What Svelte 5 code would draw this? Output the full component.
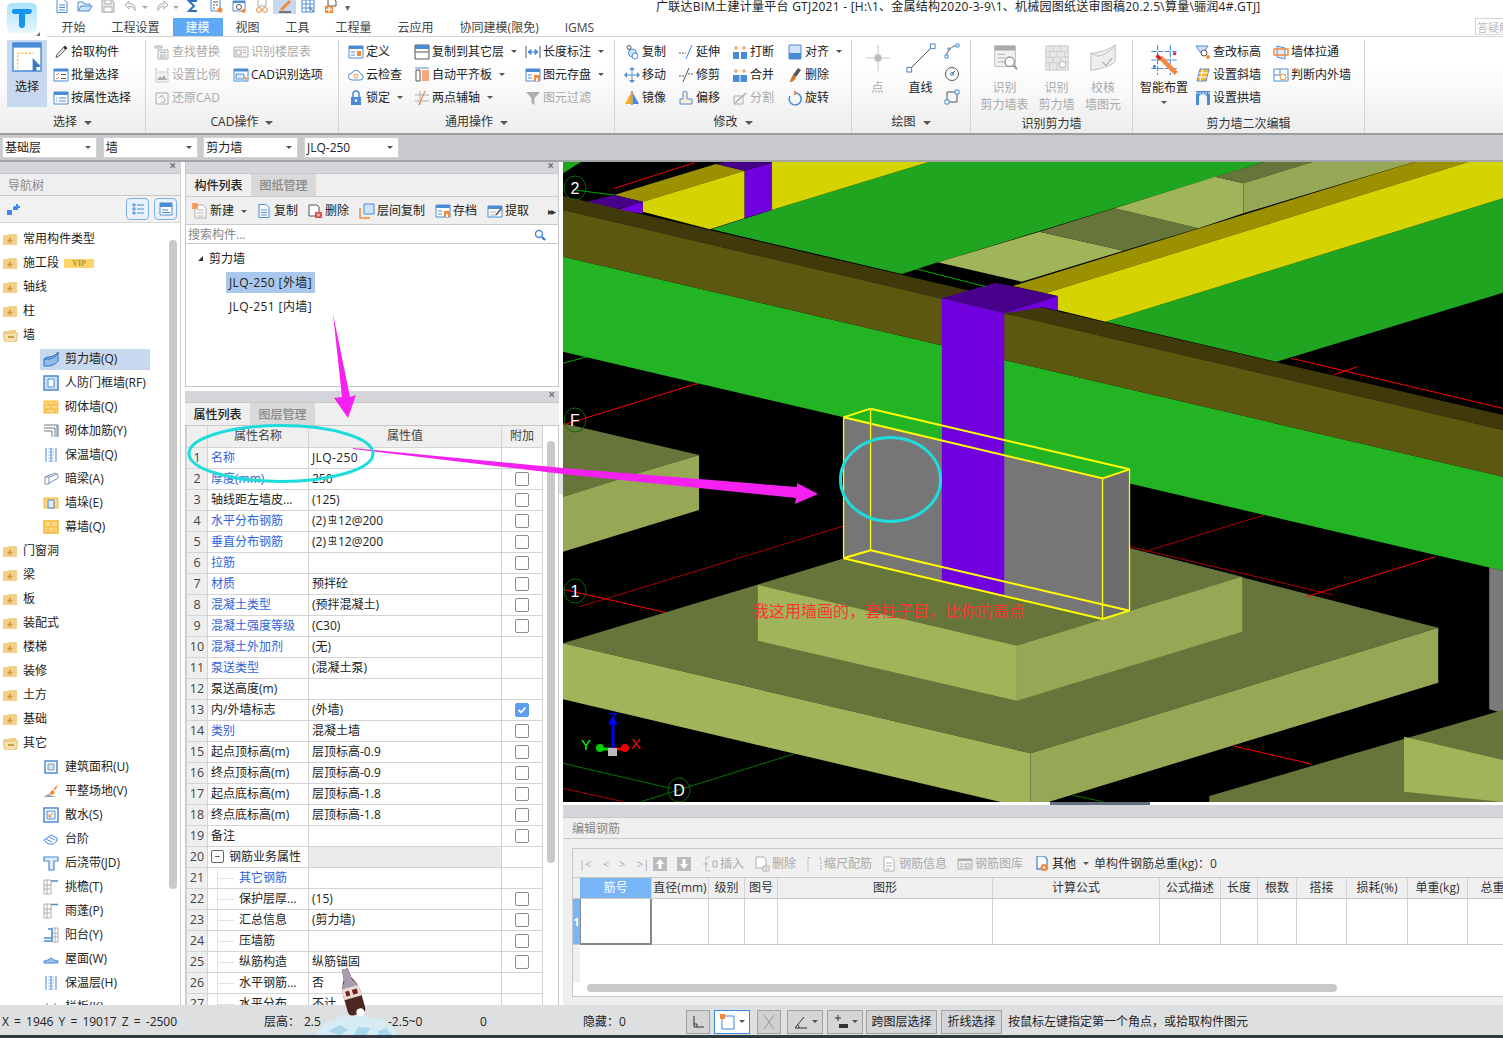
<script>
  const B = "#4a8bd6", O = "#f5893a", G = "#aeaeae", D = "#555", Y = "#f7b82e";

  const icons = {
    file: `<path d="M3 1.5h7l3 3v10H3z" fill="#fff" stroke="${B}"/><path d="M5 7h6M5 9.5h6M5 12h6" stroke="${B}"/>`,
    open: `<path d="M1 13V4h5l1 2h6v2" fill="#eaf3fc" stroke="${B}"/><path d="M1 13l3-5h11l-3 5z" fill="#cfe3f8" stroke="${B}"/>`,
    save: `<path d="M2 2h10l2 2v10H2z" fill="#e6e6e6" stroke="${G}"/><path d="M5 2h6v4H5zM4 9h8v5H4z" fill="#fff" stroke="${G}"/>`,
    undo: `<path d="M6 3L2 7l4 4V8.500c3 0 5 1 6 4 1-5-2-7-6-7z" fill="#f2f2f2" stroke="${G}"/>`,
    redo: `<path d="M10 3l4 4-4 4V8.500c-3 0-5 1-6 4-1-5 2-7 6-7z" fill="#f2f2f2" stroke="${G}"/>`,
    sigma: `<path d="M12 3H4l5 5-5 5h8" fill="none" stroke="#2f6fc0" stroke-width="2"/>`,
    calc: `<path d="M3 1h9v12H3z" fill="#fff" stroke="${B}"/><path d="M5 4h5M5 7h2M8 7h2M5 10h2" stroke="${D}"/><circle cx="12" cy="12" r="2.500" fill="${O}"/>`,
    report: `<path d="M2 3h12v10H2z" fill="#fff" stroke="${B}"/><path d="M2 3h12v2H2z" fill="${B}"/><circle cx="8" cy="9" r="2.500" fill="none" stroke="${D}"/><circle cx="12.500" cy="13" r="2" fill="${O}"/>`,
    glasses: `<path d="M4 1h8v7H4z" fill="#fff" stroke="${G}"/><circle cx="5" cy="12" r="2.500" fill="none" stroke="${O}"/><circle cx="11" cy="12" r="2.500" fill="none" stroke="${O}"/><path d="M7.500 12h1" stroke="${O}"/>`,
    pen: `<path d="M3 11L12 2l2 2-9 9z" fill="${O}"/><path d="M2 14h12" stroke="${D}" stroke-width="1.500"/>`,
    grid: `<path d="M2 2h12v12H2zM2 6h12M2 10h12M6 2v12M10 2v12" fill="none" stroke="${B}"/><path d="M9 9l5 5" stroke="${D}"/>`,
    addfile: `<path d="M5 1h6l2 2v5H5z" fill="#fff" stroke="${D}"/><path d="M2 8h8v7H2z" fill="${O}"/><path d="M6 9v5M3 11.500h6" stroke="#fff" stroke-width="1.500"/>`,
    pick: `<path d="M12 2l2 2-1.500 1.500-2-2zM10.500 3.500l2 2L6 12l-3 1.500L4 10.500z" fill="#eee" stroke="${D}"/><path d="M11 2.500l2.500 2.500" stroke="#333" stroke-width="2"/>`,
    batch: `<path d="M1 2h14v12H1z" fill="#fff" stroke="${B}"/><path d="M1 2h14v2.500H1z" fill="${B}"/><path d="M3 7l1 1 2-2M3 11l1 1 2-2" fill="none" stroke="${O}"/><path d="M8 7.500h5M8 11.500h5" stroke="${D}"/>`,
    attr: `<path d="M1 2h14v12H1z" fill="#fff" stroke="${B}"/><path d="M1 2h14v3H1z" fill="${B}"/><path d="M3 8h1M6 8h7M3 11h1M6 11h7" stroke="${B}"/>`,
    find: `<path d="M1 2h7v2H1zM4 6h10v9H4z" fill="#f4f4f4" stroke="${G}"/><path d="M6 8.500h6M6 11h6M6 13h6" stroke="${G}"/>`,
    floor: `<path d="M1 3h14v10H1z" fill="#f4f4f4" stroke="${G}"/><path d="M3 6h5v5H3zM10 6h3M10 8.500h3" fill="none" stroke="${G}"/>`,
    scale: `<path d="M2 5h12v10H2z" fill="#f4f4f4" stroke="#ccc"/><path d="M3 13l3-4 2 2 2-3 3 5z" fill="${G}"/><path d="M2 1v3M14 1v3" stroke="${G}"/>`,
    cadopt: `<path d="M1 2h14v12H1z" fill="#fff" stroke="${B}"/><path d="M1 2h14v2.500H1z" fill="${B}"/><path d="M3 7h8v5H3z" fill="#dceafa" stroke="${B}"/><path d="M11 9l4 3-2 .5-.5 2z" fill="${O}"/>`,
    restore: `<path d="M2 3h12v11H2z" fill="#f6f6f6" stroke="${G}"/><path d="M5 8l3-3v2c2 0 3 1 3 3s-2 3-4 2" fill="none" stroke="${G}"/>`,
    define: `<path d="M1 2h14v12H1z" fill="#fff" stroke="${B}"/><path d="M1 2h14v3H1z" fill="${B}"/><path d="M3 8h4M3 11h4" stroke="${B}"/><path d="M9 7h4v5H9z" fill="${O}"/>`,
    cloud: `<path d="M4 13a3.500 3.500 0 0 1 0-7 4.500 4.500 0 0 1 8.500 1 3 3 0 0 1-.5 6z" fill="#fff" stroke="${B}"/><circle cx="8" cy="9" r="2" fill="none" stroke="${O}"/>`,
    lock: `<path d="M3 7h10v8H3z" fill="${B}"/><path d="M5 7V4a3 3 0 0 1 6 0v3" fill="none" stroke="${B}" stroke-width="1.500"/><circle cx="8" cy="10.500" r="1.300" fill="#fff"/>`,
    copylayer: `<path d="M1 1h14v14H1z" fill="#fff" stroke="${D}"/><path d="M1 1h14v4H1z" fill="${B}"/><path d="M1 8h14" stroke="${D}"/>`,
    align: `<path d="M1 1h14" stroke="${B}"/><path d="M2 3h4v11H2z" fill="#fff" stroke="${D}"/><path d="M8 3h7v11H8z" fill="#f9a67a"/>`,
    twopt: `<path d="M1 5h14M1 11h14M6 1v14M11 1L5 15" fill="none" stroke="${G}"/><path d="M11 1L5 15" stroke="${O}"/>`,
    dim: `<path d="M1 2v12M15 2v12" stroke="${D}"/><path d="M3 8h10M3 8l3-2.500v5zM13 8l-3-2.500v5z" fill="${B}" stroke="${B}"/>`,
    store: `<path d="M1 2h14v12H1z" fill="#fff" stroke="${B}"/><path d="M1 2h14v3H1z" fill="${B}"/><path d="M3 8h4M3 11h4" stroke="${B}"/><path d="M9 8h6v6H9z" fill="${O}"/><path d="M11 11h2v3h-2z" fill="#fff"/>`,
    filter: `<path d="M1 2h14L9.500 8v7l-3-2V8z" fill="${G}"/>`,
    copy: `<circle cx="5" cy="3.500" r="2" fill="none" stroke="${D}"/><circle cx="8.500" cy="9" r="4" fill="#cfe3f8" stroke="${B}"/><circle cx="11" cy="12" r="3" fill="#fff" stroke="${B}"/>`,
    extend: `<path d="M1 9h7" stroke="${D}" stroke-dasharray="2 1"/><path d="M8 15l6-14" stroke="${B}"/>`,
    breakc: `<path d="M1 8h6v7H1zM9 8h6v7H9z" fill="${B}"/><path d="M4 2v4M2 4h4M12 2v4M10 4h4" stroke="${O}"/>`,
    alignr: `<path d="M2 1h12v14H2z" fill="#cfe3f8" stroke="${B}"/><path d="M2 9h12v6H2z" fill="${B}"/>`,
    move: `<path d="M8 1v14M1 8h14" stroke="${B}"/><path d="M8 0l3 3H5zM8 16l3-3H5zM0 8l3-3v6zM16 8l-3-3v6z" fill="${B}"/>`,
    trim: `<path d="M1 9h5M10 7h5" stroke="${D}" stroke-dasharray="2 1"/><path d="M5 15l6-14" stroke="${D}"/>`,
    merge: `<path d="M1 8h14v7H1z" fill="${B}"/><path d="M8 8v7" stroke="#fff"/><path d="M4 2v4M2 4h4M12 2v4M10 4h4" stroke="${O}"/>`,
    del: `<path d="M11 1l3 2-5 7-3-2z" fill="#555"/><path d="M6 8l3 2c-1 4-4 5-7 5 2-1 2-5 4-7z" fill="#c9762d"/>`,
    mirror: `<path d="M8 1v14" stroke="${D}"/><path d="M7 3v11H1z" fill="#f5b021"/><path d="M9 3v11h6z" fill="${B}"/>`,
    offset: `<path d="M2 14V9h3V3a2 2 0 0 1 4 0v6h5v5z" fill="#f9efd0" stroke="${B}"/>`,
    split: `<path d="M2 14V6h9v8z" fill="#f3f3f3" stroke="${G}"/><path d="M3 13L14 3" stroke="${G}" stroke-width="1.500"/>`,
    rotate: `<path d="M8 3a6 6 0 1 1-5 3" fill="none" stroke="${B}" stroke-width="1.500"/><path d="M8 1v4" stroke="${O}" stroke-width="2"/>`,
    arcd: `<path d="M2 14C3 8 7 3 14 2" fill="none" stroke="${D}"/><path d="M1 12h3v3H1zM12 1h3v3h-3zM4 5h2v2H4z" fill="#fff" stroke="${B}"/>`,
    circled: `<circle cx="8" cy="8" r="6.500" fill="#fff" stroke="${D}"/><path d="M8 8l3-3" stroke="${D}"/><circle cx="8" cy="8" r="1.500" fill="none" stroke="${B}"/>`,
    rectd: `<path d="M3 3h10v10H3z" fill="none" stroke="${D}"/><path d="M1 11h4v4H1zM11 1h4v4h-4z" fill="#fff" stroke="${B}"/>`,
    height: `<path d="M1 2h12l-4 6H5z" fill="#cfe3f8" stroke="${B}"/><circle cx="9" cy="9" r="3" fill="#fff" stroke="${D}"/><circle cx="13" cy="13" r="2" fill="${O}"/>`,
    slant: `<path d="M5 2h9l-3 12H2z" fill="${Y}" stroke="${B}"/><path d="M4 6h9M3 10h9M8 2l-3 12" stroke="#fff"/>`,
    arch: `<path d="M1 1h14v14h-3V8a4 4 0 0 0-8 0v7H1z" fill="${B}"/><path d="M1 3h14" stroke="#fff" stroke-dasharray="2 1"/>`,
    pull: `<path d="M4 2l8 2v11l-8-2z" fill="#dceafa" stroke="${B}"/><path d="M1 5h14v6H1z" fill="none" stroke="${O}" stroke-width="1.500"/>`,
    inout: `<path d="M1 2h14v12H1z" fill="#fff" stroke="${B}"/><path d="M1 8h6M7 2v6" stroke="${B}"/><circle cx="10" cy="10" r="3" fill="none" stroke="${O}"/>`,
    newc: `<path d="M3 2h8l3 3v10H3z" fill="#fff" stroke="${G}"/><path d="M5 7h7M5 10h7M5 13h7" stroke="${G}"/><path d="M0 0h6v6H0z" fill="${O}" opacity=".8"/>`,
    delc: `<path d="M2 2h8l2 2v9H2z" fill="#fff" stroke="${D}"/><path d="M8 9h7v6H8z" fill="#e0483e"/><path d="M10 10.500l3 3M13 10.500l-3 3" stroke="#fff"/>`,
    layerc: `<path d="M5 1h10v10H5z" fill="#cfe3f8" stroke="${B}"/><path d="M1 5v10h10" fill="none" stroke="${O}" stroke-width="1.500"/>`,
    extract: `<path d="M1 3h14v11H1z" fill="#fff" stroke="${B}"/><path d="M1 3h14v3H1z" fill="${B}"/><path d="M3 9h6M3 12h6" stroke="${G}"/><path d="M14 6l-5 6" stroke="${D}" stroke-width="1.500"/>`,
    shear: `<path d="M1 8l3-2c4 0 8-1 11-5v9c-3 4-7 5-11 5H1z" fill="#8fbaea" stroke="#2f6fc0"/><path d="M1 8h4c4 0 8-2 10-6" fill="none" stroke="#2f6fc0"/>`,
    civil: `<path d="M1 1h14v14H1z" fill="#cfe3f8" stroke="${B}" stroke-width="1.500"/><path d="M5 4h6v8H5z" fill="#fff" stroke="${B}"/>`,
    brick: `<path d="M1 2h14v12H1z" fill="#fcd48a" stroke="${Y}"/><path d="M1 6h14M1 10h14M5 2v4M11 2v4M8 6v4M3 10v4M12 10v4" stroke="${Y}"/>`,
    rebar: `<path d="M1 2h14v12M1 5h11v9M1 8h8v6" fill="none" stroke="#777"/><path d="M14 2v12" stroke="${B}"/>`,
    insul: `<path d="M3 1v14M8 1v14M13 1v14" stroke="${B}"/><path d="M5.500 2h5M5.500 5h5M5.500 8h5M5.500 11h5M5.500 14h5" stroke="${B}" stroke-dasharray="1 1"/>`,
    hidden: `<path d="M2 6l10-4 3 2v3L5 13H2z" fill="#fff" stroke="#7792b5"/><path d="M2 6h4v7M6 6l9-3" fill="none" stroke="#7792b5"/>`,
    pier: `<path d="M1 3h14v10H1z" fill="#fcd48a" stroke="${Y}"/><path d="M5 5h6v8H5z" fill="#dceafa" stroke="${B}"/>`,
    curtain: `<path d="M1 2h14v12H1z" fill="#fcd48a" stroke="${Y}" stroke-width="1.500"/><path d="M1 8h14M8 2v6M5 8v6M11 8v6" stroke="${Y}"/>`,
    area: `<path d="M2 2h12v12H2z" fill="#fff" stroke="${B}" stroke-width="1.500"/><path d="M5 5h6v6H5z" fill="#d5deea" stroke="#8a9ab0"/>`,
    site: `<path d="M1 14l4-3 4 2 6 1z" fill="#8fa0b5"/><path d="M6 11l3-4 3 2-2 3z" fill="${O}"/><path d="M11 7l3-4" stroke="${O}" stroke-width="1.500"/>`,
    apron: `<path d="M1 1h14v14H1z" fill="#fff" stroke="${B}" stroke-width="1.500"/><path d="M4 4h8v8H4z" fill="#eef4fb" stroke="${B}"/><path d="M10 6l-4 4h3M6 10V7" fill="none" stroke="${O}"/>`,
    steps: `<path d="M1 9l7-5 6 3v3l-4 3H5z" fill="#fff" stroke="${B}"/><path d="M3 8l6 3M6 6l6 3" stroke="${B}"/>`,
    joint: `<path d="M1 2h14v4h-4v9H6V6H1z" fill="#e2ecf8" stroke="${B}" stroke-width="1.200"/>`,
    eave: `<path d="M1 1h7v14H1zM1 6h7M1 10h7M4 1v14" fill="none" stroke="${G}"/><path d="M8 2h7" stroke="${B}" stroke-width="1.500"/>`,
    canopy: `<path d="M1 1h7v14H1zM1 6h7M1 10h7M4 1v14" fill="none" stroke="${G}"/><path d="M8 1.500h7" stroke="${B}" stroke-width="1.500"/>`,
    balcony: `<path d="M9 1h6v14H9zM9 6h6M9 10h6M12 1v14" fill="none" stroke="${G}"/><path d="M1 14h8V2H5M1 11h7" fill="none" stroke="${B}" stroke-width="1.500"/>`,
    roof: `<path d="M1 12V10l4-1 3-2 3 2 4 1v2z" fill="#9cc2ec" stroke="${B}"/>`,
    plank: `<path d="M1 8h14v5H1z" fill="#fff" stroke="${B}"/><path d="M4 4v4M12 4v4" stroke="${B}"/>`,
    listv: `<path d="M3 3h2v2H3zM3 7h2v2H3zM3 11h2v2H3z" fill="none" stroke="${B}"/><path d="M7 4h7M7 8h7M7 12h7" stroke="${B}"/>`,
    cardv: `<path d="M2 2h12v12H2z" fill="#fff" stroke="${B}"/><path d="M2 2h12v4H2z" fill="${B}"/><path d="M4 9h6M4 11.500h8" stroke="${B}"/>`,
    up: `<path d="M1 1h14v14H1z" fill="#bbb"/><path d="M8 3l4 5H9.500v5h-3V8H4z" fill="#fff"/>`,
    down: `<path d="M1 1h14v14H1z" fill="#bbb"/><path d="M8 13l4-5H9.500V3h-3v5H4z" fill="#fff"/>`,
    inserts: `<path d="M8 1H4v14h4" fill="none" stroke="${G}" stroke-dasharray="3 1"/><path d="M6 8H1M11 5h4v6h-4z" fill="none" stroke="${G}"/>`,
    dels: `<path d="M2 1h8l2 2v9H2z" fill="#fff" stroke="${G}"/><path d="M9 10h6v5H9z" fill="#fff" stroke="${G}"/><path d="M10.500 11l3 3M13.500 11l-3 3" stroke="${G}"/>`,
    shrink: `<path d="M2 15V2M2 2h3M13 2h2v13" fill="none" stroke="${G}" stroke-dasharray="2 1"/>`,
    info: `<path d="M3 1h7l3 3v11H3z" fill="#fff" stroke="${G}"/><path d="M5 7h6M5 10h6M5 13h4" stroke="${G}"/>`,
    lib: `<path d="M1 3h14v10H1z" fill="#eee" stroke="${G}"/><path d="M1 3h14v2H1z" fill="${G}"/><path d="M3 8h3M3 10.500h3M8 8h5v3H8z" fill="none" stroke="${G}"/>`,
    other: `<path d="M3 0h7l3 3v10H3z" fill="#fff" stroke="${B}" stroke-width="1.300"/><circle cx="10" cy="11.500" r="3.500" fill="${O}"/><circle cx="10" cy="11.500" r="1.200" fill="#fff"/>`,
    ortho: `<path d="M4 2v11h10" fill="none" stroke="#333"/><path d="M4 10h3v3" fill="none" stroke="#333"/>`,
    selbox: `<path d="M2 2h12v13H2z" fill="#fff" stroke="#3e8ae8"/><path d="M0 0h5v5H0z" fill="${O}"/>`,
    cross: `<path d="M3 1l10 14M13 1L3 15" stroke="#999"/>`,
    angle: `<path d="M2 14h12M2 14L11 3" stroke="#333"/><path d="M6 14a6 6 0 0 0-1-3" fill="none" stroke="#333"/>`,
    plusb: `<path d="M5 1v6M2 4h6" stroke="#333"/><path d="M6 10h9v4H6z" fill="#333"/>`
  };

  const big = {
    select: `<path d="M1 1h30v30H1z" fill="#fff" stroke="#4a8bd6" stroke-width="1.500"/><path d="M1 1h30v5H1z" fill="#4a8bd6"/><path d="M6 28V12h17" fill="none" stroke="${Y}" stroke-width="1.500" stroke-dasharray="2 2"/><path d="M22 17l9 9-5 1v4h-4z" fill="#3c78c4"/>`,
    point: `<path d="M16 2v10M16 20v10M3 16h9M20 16h9" stroke="#c4c4c4"/><circle cx="16" cy="16" r="4" fill="#bbb"/>`,
    line: `<path d="M4 28L28 4" stroke="#444"/><path d="M1 26h5v5H1zM26 1h5v5h-5z" fill="#fff" stroke="#3e78c8"/>`,
    wtable: `<path d="M5 3h22v22H5z" fill="#f2f2f2" stroke="#bbb"/><path d="M5 3h22v5H5z" fill="#aaa"/><path d="M8 12h8M8 16h8M8 20h8" stroke="#aaa"/><circle cx="21" cy="20" r="5" fill="#fff" stroke="#999" stroke-width="1.500"/><path d="M25 24l4 4" stroke="#999" stroke-width="2"/>`,
    wall: `<path d="M4 3h24v26H4z" fill="#e6e6e6" stroke="#ccc"/><path d="M4 9h24M4 15h24M4 21h24M12 3v6M20 3v6M8 9v6M16 9v6M24 9v6M12 15v6M20 15v6M8 21v8M16 21v8" stroke="#ccc"/><circle cx="22" cy="23" r="3.500" fill="#fff" stroke="#aaa"/>`,
    check: `<path d="M3 11c10-1 20-4 26-9v18c-6 5-16 8-26 9z" fill="#eee" stroke="#bbb"/><path d="M3 11l7 3c8-1 14-5 19-12" fill="none" stroke="#bbb"/><path d="M15 20l4 4 7-8" fill="none" stroke="#bbb" stroke-width="1.500"/>`,
    smart: `<path d="M4 8h24M4 16h24M4 24h24M10 2v28M22 2v28" stroke="#4a8bd6" stroke-dasharray="5 1.500"/><path d="M14 12l15 15-3 3L11 15z" fill="${O}"/><path d="M10 10l4 4-3 2-3-3z" fill="#d23"/><circle cx="7" cy="22" r="1.500" fill="#4a8bd6"/><circle cx="26" cy="10" r="1.500" fill="#d23"/>`
  };

  const qa = ["file", "open", "save", "undo", "caret", "redo", "caret", "sigma", "calc", "report", "glasses", "pen", "grid", "addfile", "more"];

  const tabs = ["开始", "工程设置", "建模", "视图", "工具", "工程量", "云应用", "协同建模(限免)", "IGMS"];

  const sel = [
    { w: 0, items: [["pick", "拾取构件"], ["batch", "批量选择"], ["attr", "按属性选择"]] }
  ];
  const cadCols = [
    { w: 79, items: [["find", "查找替换", 0, 1], ["scale", "设置比例", 0, 1], ["restore", "还原CAD", 0, 1]] },
    { w: 100, items: [["floor", "识别楼层表", 0, 1], ["cadopt", "CAD识别选项"]] }
  ];
  const genCols = [
    { w: 66, items: [["define", "定义"], ["cloud", "云检查"], ["lock", "锁定", 1]] },
    { w: 111, items: [["copylayer", "复制到其它层", 1], ["align", "自动平齐板", 1], ["twopt", "两点辅轴", 1]] },
    { w: 85, items: [["dim", "长度标注", 1], ["store", "图元存盘", 1], ["filter", "图元过滤", 0, 1]] }
  ];
  const modCols = [
    { w: 54, items: [["copy", "复制"], ["move", "移动"], ["mirror", "镜像"]] },
    { w: 54, items: [["extend", "延伸"], ["trim", "修剪"], ["offset", "偏移"]] },
    { w: 55, items: [["breakc", "打断"], ["merge", "合并"], ["split", "分割", 0, 1]] },
    { w: 60, items: [["alignr", "对齐", 1], ["del", "删除"], ["rotate", "旋转"]] }
  ];
  const shearCols = [
    { w: 78, items: [["height", "查改标高"], ["slant", "设置斜墙"], ["arch", "设置拱墙"]] },
    { w: 80, items: [["pull", "墙体拉通"], ["inout", "判断内外墙"]] }
  ];
  const recognise = [
    ["wtable", "识别", "剪力墙表", 61],
    ["wall", "识别", "剪力墙", 43],
    ["check", "校核", "墙图元", 50]
  ];

  const combos = ["基础层", "墙", "剪力墙", "JLQ-250"];

  const tree = [
    { t: "常用构件类型", f: 1 }, { t: "施工段", f: 1, vip: 1 }, { t: "轴线", f: 1 }, { t: "柱", f: 1 }, { t: "墙", f: 2 },
    { t: "剪力墙(Q)", i: "shear", s: 1 }, { t: "人防门框墙(RF)", i: "civil" }, { t: "砌体墙(Q)", i: "brick" },
    { t: "砌体加筋(Y)", i: "rebar" }, { t: "保温墙(Q)", i: "insul" }, { t: "暗梁(A)", i: "hidden" },
    { t: "墙垛(E)", i: "pier" }, { t: "幕墙(Q)", i: "curtain" },
    { t: "门窗洞", f: 1 }, { t: "梁", f: 1 }, { t: "板", f: 1 }, { t: "装配式", f: 1 }, { t: "楼梯", f: 1 },
    { t: "装修", f: 1 }, { t: "土方", f: 1 }, { t: "基础", f: 1 }, { t: "其它", f: 2 },
    { t: "建筑面积(U)", i: "area" }, { t: "平整场地(V)", i: "site" }, { t: "散水(S)", i: "apron" }, { t: "台阶", i: "steps" },
    { t: "后浇带(JD)", i: "joint" }, { t: "挑檐(T)", i: "eave" }, { t: "雨蓬(P)", i: "canopy" }, { t: "阳台(Y)", i: "balcony" },
    { t: "屋面(W)", i: "roof" }, { t: "保温层(H)", i: "insul" }, { t: "栏板(K)", i: "plank" }
  ];

  const compTools = [
    ["newc", "新建", 64, 1], ["file", "复制", 51], ["delc", "删除", 52], ["layerc", "层间复制", 76],
    ["store", "存档", 52], ["extract", "提取", 50]
  ];

  // n: name, v: value, b: blue name, c: checkbox (1 off, 2 on), k: child row
  const props = [
    { n: "名称", v: "JLQ-250", b: 1, w: 1 }, { n: "厚度(mm)", v: "250", b: 1, c: 1 }, { n: "轴线距左墙皮...", v: "(125)", c: 1 },
    { n: "水平分布钢筋", v: "(2)", r: 1, b: 1, c: 1 }, { n: "垂直分布钢筋", v: "(2)", r: 1, b: 1, c: 1 }, { n: "拉筋", v: "", b: 1, c: 1 },
    { n: "材质", v: "预拌砼", b: 1, c: 1 }, { n: "混凝土类型", v: "(预拌混凝土)", b: 1, c: 1 }, { n: "混凝土强度等级", v: "(C30)", b: 1, c: 1 },
    { n: "混凝土外加剂", v: "(无)", b: 1 }, { n: "泵送类型", v: "(混凝土泵)", b: 1 }, { n: "泵送高度(m)", v: "" },
    { n: "内/外墙标志", v: "(外墙)", c: 2 }, { n: "类别", v: "混凝土墙", b: 1, c: 1 }, { n: "起点顶标高(m)", v: "层顶标高-0.9", c: 1 },
    { n: "终点顶标高(m)", v: "层顶标高-0.9", c: 1 }, { n: "起点底标高(m)", v: "层顶标高-1.8", c: 1 }, { n: "终点底标高(m)", v: "层顶标高-1.8", c: 1 },
    { n: "备注", v: "", c: 1 }, { n: "钢筋业务属性", v: "", g: 1 }, { n: "其它钢筋", v: "", b: 1, k: 1 },
    { n: "保护层厚...", v: "(15)", k: 1, c: 1 }, { n: "汇总信息", v: "(剪力墙)", k: 1, c: 1 }, { n: "压墙筋", v: "", k: 1, c: 1 },
    { n: "纵筋构造", v: "纵筋锚固", k: 1, c: 1 }, { n: "水平钢筋...", v: "否", k: 1 }, { n: "水平分布...", v: "不计", k: 1 }
  ];

  const rebarNav = [["|<", 24], ["<", 16], [">", 18], [">|", 18]];
  const rebarTools = [
    ["up", "", 24], ["down", "", 26], ["inserts", "插入", 52], ["dels", "删除", 52], ["shrink", "缩尺配筋", 75],
    ["info", "钢筋信息", 76], ["lib", "钢筋图库", 77]
  ];
  const rebarCols = [
    ["筋号", 72], ["直径(mm)", 57], ["级别", 36], ["图号", 33], ["图形", 215], ["计算公式", 167], ["公式描述", 61],
    ["长度", 37], ["根数", 39], ["搭接", 50], ["损耗(%)", 61], ["单重(kg)", 60], ["总重", 50]
  ];

  const DK = "#66753a", LT = "#a0b45a", SD = "#96a855", GRN = "#22b422", DGR = "#1fa51f";
  const YEL = "#d5d300", OLV = "#9a9000", PUR = "#7000dd", PDK = "#47008a";

  // coordinates: x is scaled 1.668, y 3 (the svg below stretches to its box)
  const faces = [
    [DGR, "0,6 30,6 0,40"],
    [DGR, "248,208 348,150 610,6 1170,6 625,307 565,342"],
    [DGR, "905,485 1568,115 1568,398 1190,605"],
    [LT, "625,307 795,215 935,272 765,365"],
    [DK, "795,215 920,145 1060,205 935,272"],
    [LT, "920,145 1088,50 1135,70 1135,160 1060,205"],
    [DK, "1088,50 1170,6 1250,6 1135,70"],
    [SD, "1135,70 1250,6 1420,6 1135,160"],
    [OLV, "750,378 1420,6 1510,6 805,400"],
    [YEL, "805,400 1510,6 1568,6 1568,115 905,485 825,450 825,408"],
    [OLV, "85,105 255,12 303,32 133,125"],
    [YEL, "133,125 303,32 303,175 245,208 133,155"],
    [YEL, "348,6 610,6 348,150"],
    [PUR, "303,32 348,8 348,150 303,175"],
    [PDK, "255,12 270,6 348,6 303,32"],
    [PDK, "40,125 85,105 133,125 85,150"],
    [PUR, "85,152 133,125 133,160"],
    ["#a89f20", "25,135 42,128 85,150 65,158"],
    [GRN, "0,290 1568,950 1568,1232 920,960 468,772 0,575"],
    ["#403a0a", "0,108 1568,765 1568,810 0,150"],
    ["#5c5810", "0,150 1568,810 1568,950 0,290"],
    [PDK, "632,415 722,368 825,408 736,460"],
    [PUR, "736,460 825,408 825,452 800,442"],
    [DK, "0,790 227,885 125,940 0,1010"],
    [SD, "125,940 227,885 227,1050 0,1175 0,1010"],
    [DK, "0,1450 470,1195 945,1165 1460,1403 780,1780"],
    [LT, "0,1450 780,1780 780,1926 730,1926 0,1618"],
    [SD, "780,1780 1460,1403 1460,1568 810,1926 780,1926"],
    [DK, "325,1275 470,1195 945,1165 1133,1250 757,1457"],
    [LT, "325,1275 757,1457 757,1622 325,1442"],
    [SD, "757,1457 1133,1250 1133,1415 757,1622"],
    ["#7a7a7a", "1545,1222 1568,1232 1568,1660 1545,1648"],
    [DK, "1078,1908 1568,1650 1568,1926 1078,1926"],
    [LT, "1403,1730 1568,1800 1568,1926 1403,1895"],
    ["#6d6d6d", "900,955 945,928 945,1352 900,1377"],
    ["#767676", "468,772 900,955 900,1377 468,1195"],
    [PUR, "632,415 736,460 736,1305 632,1265"]
  ];
  const rays = [
    ["#f00", "1215,595 1568,745"], ["#f00", "1285,645 1325,620"], ["#f00", "225,670 0,795"], ["#e00", "220,8 85,85"],
    ["#0a0", "590,327 705,380"], ["#0a0", "0,610 40,590"], ["#0a0", "20,90 85,105"],
    ["#a00", "28,1340 468,1098"], ["#a00", "945,1160 1285,1305"], ["#a00", "970,1175 1170,1065"], ["#f00", "1240,1310 1455,1190"],
    ["#f00", "0,1288 170,1357"], ["#f00", "1118,1758 1248,1812"], ["#070", "0,1810 180,1885"], ["#070", "130,1925 385,1782"],
    ["#070", "850,1905 900,1925"], ["#a00", "0,1885 100,1925"]
  ];
  const wireThick = [
    "468,772 900,955", "513,746 945,928", "468,772 513,746", "900,955 945,928",
    "468,1195 900,1377", "513,1171 945,1352", "468,1195 513,1171", "900,1377 945,1352"
  ];
  const wireThin = ["468,772 468,1195", "513,746 513,1171", "900,955 900,1377", "945,928 945,1352"];
  const axes = [["2", 575, 188], ["F", 575, 420], ["1", 575, 591], ["D", 679, 790]];
</script>

{#snippet icon(name, size = 16)}
  <svg class="ic" width={size} height={size} viewBox="0 0 16 16">{@html icons[name]}</svg>
{/snippet}

{#snippet bigIcon(name, size = 32)}
  <svg class="ic" width={size} height={size} viewBox="0 0 32 32">{@html big[name]}</svg>
{/snippet}

{#snippet toolCol(col)}
  <div class="tcol" style="width:{col.w}px">
    {#each col.items as [ic, label, arrow, off]}
      <div class="tool" class:off>
        {@render icon(ic)}<span>{label}</span>{#if arrow}<i class="caret"></i>{/if}
      </div>
    {/each}
  </div>
{/snippet}

{#snippet groupLabel(text, arrow = true)}
  <div class="glabel" class:low={!arrow}>{text}{#if arrow}<i class="caret lg"></i>{/if}</div>
{/snippet}

{#snippet strip(closable = true)}
  <div class="strip">{#if closable}<span class="x">×</span>{/if}</div>
{/snippet}

<div class="app">
  <header class="top">
    <div class="logo">
      <svg width="30" height="30" viewBox="0 0 30 30">
        <defs><linearGradient id="lg" x1="0" y1="0" x2="0" y2="1"><stop offset="0" stop-color="#a9e2fb" /><stop offset="1" stop-color="#e8f7ff" /></linearGradient></defs>
        <rect width="30" height="30" rx="5" fill="url(#lg)" />
        <path d="M5 8q0-2 2-2h16q2 0 2 2t-2 3h-5v11q0 3-3 3t-3-3V11H7q-2 0-2-3z" fill="#1495ee" />
      </svg>
      <i class="grip"></i>
    </div>
    <div class="topr">
      <div class="qrow">
        <div class="qa">
          {#each qa as q}
            {#if q === "caret"}<i class="caret qc"></i>
            {:else if q === "more"}<span class="qmore">▾</span>
            {:else}<span class="qi" class:on={q === "pen"}>{@render icon(q)}</span>{/if}
          {/each}
        </div>
        <div class="title">广联达BIM土建计量平台 GTJ2021 - [H:\1、金属结构2020-3-9\1、机械园图纸送审图稿20.2.5\算量\骊润4#.GTJ]</div>
      </div>
      <nav class="tabs">
        {#each tabs as t}<span class="tab" class:on={t === "建模"}>{t}</span>{/each}
        <span class="help">答疑解</span>
      </nav>
    </div>
  </header>

  <section class="ribbon">
    <div class="group" style="width:146px">
      <div class="gbody first">
        <div class="bigsel">{@render bigIcon("select", 30)}<span>选择</span></div>
        {@render toolCol(sel[0])}
      </div>
      {@render groupLabel("选择")}
    </div>
    <div class="group" style="width:193px">
      <div class="gbody p8">{#each cadCols as c}{@render toolCol(c)}{/each}</div>
      {@render groupLabel("CAD操作")}
    </div>
    <div class="group" style="width:276px">
      <div class="gbody p9">{#each genCols as c}{@render toolCol(c)}{/each}</div>
      {@render groupLabel("通用操作")}
    </div>
    <div class="group" style="width:237px">
      <div class="gbody p9">{#each modCols as c}{@render toolCol(c)}{/each}</div>
      {@render groupLabel("修改")}
    </div>
    <div class="group" style="width:119px">
      <div class="gbody draw">
        <div class="bigt off w44">{@render bigIcon("point", 30)}<span>点</span></div>
        <div class="bigt w44">{@render bigIcon("line", 30)}<span>直线</span></div>
        <div class="tcol minis">{@render icon("arcd")}{@render icon("circled")}{@render icon("rectd")}</div>
      </div>
      {@render groupLabel("绘图")}
    </div>
    <div class="group" style="width:162px">
      <div class="gbody rec">
        {#each recognise as [ic, a, b, w]}
          <div class="bigt off" style="width:{w}px">{@render bigIcon(ic, 30)}<span>{a}</span><span>{b}</span></div>
        {/each}
      </div>
      {@render groupLabel("识别剪力墙", false)}
    </div>
    <div class="group" style="width:232px">
      <div class="gbody">
        <div class="bigt w62 smart">{@render bigIcon("smart", 34)}<span>智能布置</span><i class="caret"></i></div>
        {#each shearCols as c}{@render toolCol(c)}{/each}
      </div>
      {@render groupLabel("剪力墙二次编辑", false)}
    </div>
  </section>

  <section class="combos">
    {#each combos as c}<div class="combo"><span>{c}</span><i class="caret"></i></div>{/each}
  </section>

  <main class="main">
    <aside class="nav">
      {@render strip()}
      <div class="navh">导航树</div>
      <div class="navt">
        <svg width="16" height="12" viewBox="0 0 16 12"><path d="M1 7h5v5H1zM7 4h3v3H7z" fill="#3e8ae8" /><path d="M10 1h2v2h2v2h-2v2h-2V5H8V3h2z" fill="#3e8ae8" /></svg>
        <span class="grow"></span>
        <span class="vbtn">{@render icon("listv")}</span>
        <span class="vbtn">{@render icon("cardv")}</span>
      </div>
      <div class="navlist">
        <div class="navbar"></div>
        {#each tree as n}
          <div class="trow" class:kid={n.i}>
            {#if n.f}
              <svg class="ic" width="15" height="13" viewBox="0 0 15 13">
                {#if n.f === 1}
                  <path d="M0 3q0-1 1-1h4l1-1h7q1 0 1 1v10H0z" fill="#f3cf87" />
                  <path d="M7 5v5M4.500 7.500h5" stroke="#c89a3c" stroke-width="1.500" />
                {:else}
                  <path d="M1 2h5l1-1h6v3H1z" fill="#f3cf87" />
                  <path d="M0 4h15l-2 9H2z" fill="#f8e0ab" stroke="#e9c06e" />
                  <path d="M5 8h6" stroke="#b98a30" stroke-width="1.500" />
                {/if}
              </svg>
            {/if}
            {#if n.i}
              <div class="kidb" class:sel={n.s}>{@render icon(n.i)}<span>{n.t}</span></div>
            {:else}
              <span>{n.t}</span>
            {/if}
            {#if n.vip}<b class="vip">VIP</b>{/if}
          </div>
        {/each}
      </div>
    </aside>

    <section class="mid">
      <div class="cpanel">
        {@render strip()}
        <div class="ptabs"><span class="pt on">构件列表</span><span class="pt">图纸管理</span></div>
        <div class="ctools">
          {#each compTools as [ic, label, w, arrow]}
            <span class="ctool" style="width:{w}px">{@render icon(ic)}<span>{label}</span>{#if arrow}<i class="caret"></i>{/if}</span>
          {/each}
          <span class="ff">▸▸</span>
        </div>
        <div class="search">
          <span>搜索构件...</span>
          <svg width="12" height="12" viewBox="0 0 12 12"><circle cx="5" cy="5" r="3.500" fill="none" stroke="#4a8bd6" stroke-width="1.500" /><path d="M8 8l3 3" stroke="#2c6fc0" stroke-width="2" /></svg>
        </div>
        <div class="ctree">
          <div class="croot"><i class="tri"></i>剪力墙</div>
          <div class="citem on">JLQ-250 [外墙]</div>
          <div class="citem">JLQ-251 [内墙]</div>
        </div>
      </div>
      <div class="ppanel">
        {@render strip()}
        <div class="ptabs"><span class="pt on">属性列表</span><span class="pt">图层管理</span></div>
        <div class="pbody">
          <table class="ptable">
            <colgroup><col class="c0" /><col class="c1" /><col class="c2" /><col class="c3" /></colgroup>
            <thead>
              <tr><th></th><th>属性名称</th><th>属性值</th><th>附加</th></tr>
            </thead>
            <tbody>
              {#each props as p, i}
                <tr>
                  <td class="idx">{i + 1}</td>
                  <td class="nm" class:blue={p.b} class:kid={p.k} class:grp={p.g}>
                    {#if p.g}<i class="minus">−</i>{/if}
                    {#if p.k}<i class="tl"></i>{/if}
                    {p.n}
                  </td>
                  <td class="val" class:gv={p.g} class:wide={p.w}>
                    {p.v}{#if p.r}<span class="steel">⾍</span>12@200{/if}
                  </td>
                  <td class="cb">
                    {#if p.c}
                      <i class="box" class:on={p.c === 2}>
                        {#if p.c === 2}<svg width="14" height="14" viewBox="0 0 14 14"><path d="M3.500 7l2.500 2.500 4.500-5" fill="none" stroke="#fff" stroke-width="1.800" /></svg>{/if}
                      </i>
                    {/if}
                  </td>
                </tr>
              {/each}
            </tbody>
          </table>
          <div class="pscroll"><div class="pthumb"></div></div>
        </div>
      </div>
    </section>

    <div class="split"><i class="handle"></i></div>

    <section class="right">
      <div class="view">
        <svg class="vp" viewBox="0 6 1568 1920" preserveAspectRatio="none">
          <rect x="0" y="6" width="1568" height="1920" fill="#000" />
          {#each faces as [fill, points]}<polygon {points} {fill} />{/each}
          {#each rays as [stroke, points]}<polyline {points} {stroke} fill="none" />{/each}
          {#each wireThin as points}<polyline {points} stroke="#ff0" fill="none" class="wire" />{/each}
          {#each wireThick as points}<polyline {points} stroke="#ff0" fill="none" class="wire thick" />{/each}
        </svg>
        <svg class="vplabels" viewBox="563 162 940 640">
          {#each axes as [t, x, y]}
            <ellipse cx={x} cy={y} rx="11" ry="12" fill="none" stroke="#0a6a0a" />
            <text {x} y={y + 6} class="axis">{t}</text>
          {/each}
          <text x="753" y="617" class="note">我这用墙画的，套柱子目，比你的高点</text>
          <path d="M613 748V722" stroke="#00f" stroke-width="3" />
          <path d="M613 715l-4 10h8z" fill="#00f" />
          <path d="M612 749H600" stroke="#0c0" stroke-width="3" />
          <circle cx="600" cy="748" r="4" fill="#0c0" />
          <path d="M614 749H625" stroke="#e00" stroke-width="3" />
          <circle cx="625" cy="748" r="4" fill="#e00" />
          <rect x="608" y="748" width="9" height="8" fill="#bbb" />
          <text x="613" y="723" class="ax blue">Z</text>
          <text x="586" y="750" class="ax green">Y</text>
          <text x="636" y="749" class="ax red">X</text>
        </svg>
      </div>
      <div class="vgap"><i class="vhandle"></i></div>
      <div class="rstrip">{@render strip(false)}</div>
      <div class="rh">编辑钢筋</div>
      <div class="rbody">
        <div class="rbox">
          <div class="rtools">
            {#each rebarNav as [t, w]}<span class="rnav" style="width:{w}px">{t}</span>{/each}
            {#each rebarTools as [ic, label, w]}
              <span class="rtool" style="width:{w}px">{@render icon(ic)}<span>{label}</span></span>
            {/each}
            <span class="rtool live" style="width:61px">{@render icon("other")}<span>其他</span><i class="caret"></i></span>
            <span class="rsum">单构件钢筋总重(kg)：0</span>
          </div>
          <div class="rgrid">
            <div class="rhead">
              <span class="rcorner"></span>
              {#each rebarCols as [t, w], i}<span class="rcol" class:act={i === 0} style="width:{w}px">{t}</span>{/each}
            </div>
            <div class="rrow">
              <span class="rno">1</span>
              {#each rebarCols as [t, w], i}<span class="rcell" class:act={i === 0} style="width:{w}px"></span>{/each}
            </div>
          </div>
          <div class="rgut"></div>
          <div class="rscroll"><div class="rthumb"></div></div>
        </div>
      </div>
    </section>
  </main>

  <footer class="status">
    <span class="coord">X = 1946 Y = 19017 Z = -2500</span>
    <span class="s1">层高：</span><span class="s2">2.5</span>
    <span class="s3">-2.5~0</span><span class="s4">0</span>
    <span class="s5">隐藏：</span><span class="s6">0</span>
    <span class="sbtn w24">{@render icon("ortho")}</span>
    <span class="sbtn w36 hot">{@render icon("selbox")}<i class="caret"></i></span>
    <span class="sbtn w24 dim">{@render icon("cross")}</span>
    <span class="sbtn w36">{@render icon("angle")}<i class="caret"></i></span>
    <span class="sbtn w36 end">{@render icon("plusb")}<i class="caret"></i></span>
    <span class="sbtn tx">跨图层选择</span>
    <span class="sbtn tx">折线选择</span>
    <span class="hint">按鼠标左键指定第一个角点，或拾取构件图元</span>
  </footer>
  <div class="edge"></div>

  <svg class="marks" viewBox="0 0 1503 1038">
    <polygon points="333,314 350,397 356,395 348,418 334,398 342,397" fill="#f521f0" />
    <polygon points="353,448 563,468 797,487 797,483 818,494 795,504 796,498 563,474 353,449" fill="#f521f0" />
    <ellipse cx="281" cy="453.500" rx="92" ry="28" fill="none" stroke="#1fdcdc" stroke-width="3" />
    <ellipse cx="890.500" cy="479.500" rx="50" ry="42" fill="none" stroke="#1fdcdc" stroke-width="3" />
    <g>
      <path d="M315 1035q8-14 20-15 6-6 16-3 10-5 20 1 16-1 28 17z" fill="#d6ecf5" />
      <path d="M328 1031l12-6 8 5-9 5zM358 1027l12 1-4 7h-12zM378 1031l8-3 6 7h-14z" fill="#a8d6ea" />
      <g transform="translate(352 994) rotate(-16)">
        <path d="M-3-26h6l1 10q5 8 5 16v16q0 5-5 5h-8q-5 0-5-5V0q0-8 5-16z" fill="#4d2620" />
        <path d="M-3-26h6l1 12q3 3 4 8h-16q1-5 4-8z" fill="#a99cb0" />
        <rect x="-9" y="-7" width="18" height="11" fill="#e8dcd2" />
        <path d="M-6-4h4v5h-4zM1-4h5v5H1z" fill="#7a1f1f" />
        <circle cx="3" cy="20" r="4" fill="#fff" />
      </g>
    </g>
  </svg>
</div>

<style>
  :global(body) {
    margin: 0;
    background: #fff;
  }
  .app {
    position: relative;
    width: 1503px;
    height: 1038px;
    overflow: hidden;
    display: flex;
    flex-direction: column;
    font: 12px/16px "Open Sans", "Noto Sans CJK SC", sans-serif;
    color: #222;
    background: #fff;
  }
  .ic {
    flex: none;
    display: block;
  }
  .caret {
    display: inline-block;
    width: 0;
    height: 0;
    margin-left: 5px;
    border: 3px solid transparent;
    border-top: 3px solid #555;
    border-bottom: 0;
    vertical-align: middle;
    flex: none;
  }
  .caret.lg {
    margin-left: 7px;
    border-width: 4px 4px 0;
  }

  /* title + tabs */
  .top {
    display: flex;
    height: 37px;
    flex: none;
  }
  .logo {
    position: relative;
    width: 47px;
    padding: 3px 0 0 7px;
    box-sizing: border-box;
  }
  .grip {
    position: absolute;
    left: 36px;
    top: 32px;
    border: 2px solid #777;
    border-color: transparent #777 #777 transparent;
  }
  .topr {
    flex: 1;
    border-bottom: 1px solid #d4d4d4;
  }
  .qrow {
    display: flex;
    height: 18px;
    overflow: hidden;
  }
  .qa {
    display: flex;
    align-items: center;
    width: 609px;
    height: 14px;
    padding-left: 3px;
    box-sizing: border-box;
    flex: none;
  }
  .qi {
    width: 23px;
    height: 16px;
    display: flex;
    justify-content: center;
    margin-top: -2px;
    flex: none;
  }
  .qi.on {
    background: #c7d8ef;
  }
  .qc {
    margin: 0 2px 0 0;
    border-top-color: #aaa;
  }
  .qmore {
    margin-left: 3px;
    color: #666;
    font-size: 10px;
  }
  .title {
    line-height: 13px;
    white-space: nowrap;
    font-size: 12px;
    letter-spacing: 0.24px;
  }
  .tabs {
    position: relative;
    display: flex;
    height: 18px;
    padding-left: 1.500px;
  }
  .tab {
    padding: 0 13px;
    line-height: 20px;
    color: #444;
  }
  .tab:last-of-type {
    margin-left: 2px;
    letter-spacing: 0.4px;
  }
  .tab.on {
    background: #5ea9f6;
    color: #fff;
    border-radius: 1px 1px 0 0;
  }
  .help {
    position: absolute;
    right: 0;
    top: 0;
    width: 28px;
    height: 17px;
    border: 1px solid #d5d5d5;
    border-right: 0;
    color: #bbb;
    font-size: 11px;
    line-height: 17px;
    overflow: hidden;
    white-space: nowrap;
    padding-left: 1px;
    box-sizing: border-box;
  }

  /* ribbon */
  .ribbon {
    display: flex;
    height: 98px;
    flex: none;
    background: linear-gradient(#fff 30%, #ededed);
    border-bottom: 2px solid #9d9d9d;
    box-sizing: border-box;
  }
  .group {
    display: flex;
    flex-direction: column;
    box-sizing: border-box;
    flex: none;
    border-right: 1px solid #d4d4d4;
    margin-top: 3px;
  }
  .gbody {
    display: flex;
    height: 69px;
    box-sizing: border-box;
  }
  .p8 {
    padding-left: 8px;
  }
  .p9 {
    padding-left: 9px;
  }
  .first {
    padding-left: 7px;
    gap: 6px;
  }
  .glabel {
    flex: 1;
    text-align: center;
    padding-top: 2px;
    line-height: 22px;
    color: #333;
  }
  .glabel.low {
    padding-top: 4px;
  }
  .tcol {
    flex: none;
  }
  .tool {
    display: flex;
    align-items: center;
    height: 23px;
    gap: 2px;
    white-space: nowrap;
  }
  .tool.off,
  .bigt.off {
    color: #aaa;
  }
  .bigsel {
    width: 40px;
    height: 67px;
    background: #c7d8ef;
    display: flex;
    flex-direction: column;
    align-items: center;
    padding-top: 2px;
    box-sizing: border-box;
    line-height: 24px;
    flex: none;
  }
  .bigsel span {
    margin-top: 3px;
  }
  .bigt {
    display: flex;
    flex-direction: column;
    align-items: center;
    flex: none;
    padding-top: 3px;
    box-sizing: border-box;
    line-height: 17px;
  }
  .bigt span:first-of-type {
    margin-top: 6px;
  }
  .smart span:first-of-type {
    margin-top: 2px;
  }
  .smart .caret {
    margin: 5px 0 0;
  }
  .w44 {
    width: 43px;
  }
  .w62 {
    width: 62px;
  }
  .draw {
    padding-left: 4px;
  }
  .minis {
    display: flex;
    flex-direction: column;
    gap: 7px;
    padding: 3px 0 0 2px;
  }
  .rec {
    padding-left: 3px;
  }

  /* combo row */
  .combos {
    display: flex;
    height: 25px;
    flex: none;
    padding: 2px 0 2px 2px;
    gap: 5.670px;
    background: #c8cacd;
    box-sizing: border-box;
  }
  .combo {
    width: 95px;
    display: flex;
    align-items: center;
    justify-content: space-between;
    padding: 0 5px 0 2px;
    background: #fff;
    border: 1px solid #d2d2d2;
    box-sizing: border-box;
  }

  /* main */
  .main {
    flex: 1;
    display: flex;
    min-height: 0;
    border-top: 2px solid #a5a5a5;
  }
  .strip {
    height: 11px;
    background: #d5d6db;
    position: relative;
    flex: none;
  }
  .x {
    position: absolute;
    right: 4px;
    top: -3px;
    font-size: 12px;
    line-height: 14px;
    color: #777;
    font-weight: 700;
  }
  .nav {
    width: 181px;
    margin-right: 4px;
    flex: none;
    display: flex;
    flex-direction: column;
    border-right: 1px solid #cfcfcf;
    box-sizing: border-box;
  }
  .navh {
    height: 23px;
    line-height: 23px;
    padding-left: 8px;
    color: #888;
    background: #efefef;
    border-bottom: 1px solid #c8c8c8;
    border-top: 1px solid #c8c8c8;
    box-sizing: border-box;
  }
  .navt {
    height: 27px;
    display: flex;
    align-items: center;
    padding: 0 3px 0 6px;
    gap: 5px;
    background: #f1f1f1;
    border-bottom: 1px solid #d8d8d8;
    box-sizing: border-box;
  }
  .grow {
    flex: 1;
  }
  .vbtn {
    width: 23px;
    height: 22px;
    display: flex;
    align-items: center;
    justify-content: center;
    background: #e8f2fd;
    border: 1px solid #7db1ec;
    border-radius: 4px;
    box-sizing: border-box;
  }
  .navlist {
    position: relative;
    flex: 1;
    overflow: hidden;
    padding-top: 4px;
  }
  .navbar {
    position: absolute;
    left: 169px;
    top: 17px;
    width: 8px;
    height: 649px;
    border-radius: 4px;
    background: #c9c9c9;
  }
  .trow {
    height: 24px;
    display: flex;
    align-items: center;
    gap: 5px;
    padding-left: 3px;
    white-space: nowrap;
  }
  .trow.kid {
    padding-left: 40px;
  }
  .kidb {
    width: 110px;
    height: 21px;
    display: flex;
    align-items: center;
    gap: 6px;
    padding-left: 3px;
    box-sizing: border-box;
  }
  .kidb.sel {
    background: #c7d8ef;
  }
  .vip {
    width: 30px;
    height: 9px;
    line-height: 10px;
    margin-left: 0;
    text-align: center;
    font: 700 8px/10px "Liberation Serif", serif;
    color: #b59428;
    background: #fcd56a;
  }

  .mid {
    width: 374px;
    flex: none;
    display: flex;
    flex-direction: column;
  }
  .cpanel {
    height: 225px;
    flex: none;
    display: flex;
    flex-direction: column;
    border: 1px solid #c8c8c8;
    border-top: 0;
    box-sizing: border-box;
  }
  .ptabs {
    display: flex;
    height: 24px;
    flex: none;
    background: #efefef;
    border-top: 1px solid #c8c8c8;
    border-bottom: 1px solid #c8c8c8;
    box-sizing: border-box;
  }
  .pt {
    width: 65px;
    line-height: 23px;
    text-align: center;
    font-weight: 500;
  }
  .pt:not(.on) {
    color: #8a8a8a;
    background: #d9d9d9;
  }
  .ctools {
    display: flex;
    align-items: center;
    height: 28px;
    flex: none;
    padding: 1px 0 0 6px;
    background: #efefef;
    border-bottom: 1px solid #c8c8c8;
    box-sizing: border-box;
  }
  .ctool {
    display: flex;
    align-items: center;
    gap: 2px;
    flex: none;
    white-space: nowrap;
  }
  .ff {
    margin-left: auto;
    margin-right: 4px;
    font-size: 10px;
    color: #333;
    letter-spacing: -2px;
  }
  .search {
    display: flex;
    justify-content: space-between;
    align-items: center;
    height: 19px;
    flex: none;
    padding: 1px 12px 0 2px;
    color: #888;
    border-bottom: 1px solid #c8c8c8;
    box-sizing: border-box;
  }
  .ctree {
    flex: 1;
    padding-top: 4px;
  }
  .croot {
    display: flex;
    align-items: center;
    height: 21px;
    padding-left: 12px;
    gap: 6px;
  }
  .tri {
    width: 0;
    height: 0;
    border-left: 5px solid transparent;
    border-bottom: 5px solid #333;
  }
  .citem {
    width: fit-content;
    height: 21px;
    margin: 3px 0 0 40px;
    padding: 0 3px;
    line-height: 21px;
    letter-spacing: 0.4px;
  }
  .citem.on {
    background: #aac8ee;
  }

  .ppanel {
    margin-top: 4px;
    flex: 1;
    min-height: 0;
    display: flex;
    flex-direction: column;
  }
  .pbody {
    position: relative;
    flex: 1;
    min-height: 0;
    overflow: hidden;
    border-left: 1px solid #c8c8c8;
    border-right: 1px solid #c8c8c8;
  }
  .ptable {
    width: 356px;
    table-layout: fixed;
    border-collapse: collapse;
  }
  .c0 {
    width: 21px;
  }
  .c1 {
    width: 101px;
  }
  .c2 {
    width: 193px;
  }
  .c3 {
    width: 41px;
  }
  .ptable th,
  .ptable td {
    height: 21px;
    padding: 0;
    border: 1px solid #d4d4d4;
    box-sizing: border-box;
    font-weight: 400;
    white-space: nowrap;
    overflow: hidden;
  }
  .ptable th {
    background: #efefef;
    color: #444;
    text-align: center;
    border-top: 0;
  }
  .idx {
    background: #efefef;
    color: #444;
    text-align: center;
    font-size: 12.500px;
  }
  .nm {
    padding-left: 3px !important;
    position: relative;
  }
  .nm.blue {
    color: #2f62d8;
  }
  .nm.kid {
    padding-left: 31px !important;
  }
  .nm.grp {
    padding-left: 21px !important;
  }
  .minus {
    position: absolute;
    left: 3px;
    top: 3px;
    width: 11px;
    height: 11px;
    border: 1px solid #666;
    border-radius: 2px;
    font-style: normal;
    line-height: 11px;
    text-align: center;
    font-size: 10px;
  }
  .tl {
    position: absolute;
    left: 9px;
    top: 0;
    bottom: 0;
    border-left: 1px solid #e2e2e2;
  }
  .tl::after {
    content: "";
    position: absolute;
    left: 0;
    top: 10px;
    width: 16px;
    border-top: 1px solid #e2e2e2;
  }
  .val {
    padding-left: 3px !important;
  }
  .val.wide {
    letter-spacing: 0.4px;
  }
  .gv {
    background: #ebebeb;
  }
  .steel {
    font-size: 9px;
    vertical-align: 2px;
    margin: 0 1px 0 2px;
  }
  .cb {
    text-align: center;
  }
  .box {
    display: block;
    width: 14px;
    height: 14px;
    margin: 0 auto;
    box-sizing: border-box;
    border: 1px solid #8c8c8c;
    border-radius: 2px;
    background: #fff;
  }
  .box.on {
    background: #5b9df0;
    border-color: #5b9df0;
  }
  .box.on svg {
    display: block;
    margin: -1px;
  }
  .pscroll {
    position: absolute;
    left: 356px;
    top: 0;
    bottom: 0;
    width: 16px;
  }
  .pthumb {
    position: absolute;
    left: 5px;
    top: 15px;
    width: 8px;
    height: 422px;
    border-radius: 4px;
    background: #c9c9c9;
  }

  .split {
    position: relative;
    width: 4px;
    flex: none;
  }
  .handle {
    position: absolute;
    top: 312px;
    left: 0;
    width: 4px;
    height: 20px;
    background: #e2e2e2;
  }

  .right {
    flex: 1;
    min-width: 0;
    display: flex;
    flex-direction: column;
  }
  .view {
    position: relative;
    height: 640px;
    flex: none;
    overflow: hidden;
  }
  .vp,
  .vplabels {
    position: absolute;
    inset: 0;
    width: 940px;
    height: 640px;
  }
  .vp polyline {
    vector-effect: non-scaling-stroke;
    stroke-width: 1;
  }
  .vp .wire {
    stroke-width: 1.300;
  }
  .vp .wire.thick {
    stroke-width: 2;
  }
  .axis {
    fill: #fff;
    font: 16px "Liberation Sans", sans-serif;
    text-anchor: middle;
  }
  .note {
    fill: #f33;
    font-size: 16px;
    font-family: "Noto Sans CJK SC", sans-serif;
  }
  .ax {
    font: 15px "Liberation Sans", sans-serif;
    text-anchor: middle;
  }
  .ax.blue {
    fill: #00f;
  }
  .ax.green {
    fill: #0f0;
  }
  .ax.red {
    fill: #f00;
  }
  .vgap {
    position: relative;
    height: 3px;
    flex: none;
  }
  .vhandle {
    position: absolute;
    left: 487px;
    top: 0;
    width: 100px;
    height: 4px;
    background: #667080;
  }
  .rstrip {
    height: 12px;
    flex: none;
    background: #d5d6db;
  }
  .rh {
    height: 22px;
    flex: none;
    line-height: 22px;
    padding-left: 9px;
    color: #888;
    background: #efefef;
    border-top: 1px solid #c8c8c8;
    border-bottom: 1px solid #c8c8c8;
    box-sizing: border-box;
  }
  .rbody {
    flex: 1;
    background: #efefef;
    padding: 9px 0 0 9px;
    min-height: 0;
    box-sizing: border-box;
  }
  .rbox {
    position: relative;
    height: 149px;
    background: #fff;
    border: 1px solid #c8c8c8;
    border-right: 0;
    box-sizing: border-box;
    overflow: hidden;
  }
  .rtools {
    display: flex;
    align-items: center;
    height: 29px;
    padding: 1px 0 0 2px;
    background: #f0f0f0;
    color: #aaa;
    border-bottom: 1px solid #c8c8c8;
    box-sizing: border-box;
    white-space: nowrap;
  }
  .rnav {
    flex: none;
    color: #aaa;
    padding-left: 4px;
    box-sizing: border-box;
    font-size: 11px;
  }
  .rtool {
    display: flex;
    align-items: center;
    flex: none;
    gap: 2px;
    padding-left: 1px;
    box-sizing: border-box;
  }
  .rtool.live {
    color: #222;
  }
  .rsum {
    color: #333;
  }
  .rgrid {
    width: 940px;
  }
  .rhead,
  .rrow {
    display: flex;
  }
  .rhead {
    height: 21px;
    background: #efefef;
    border-bottom: 1px solid #c8c8c8;
    box-sizing: border-box;
  }
  .rcorner,
  .rno {
    width: 7px;
    flex: none;
  }
  .rno {
    background: #78b6f8;
    color: #fff;
    text-align: center;
    line-height: 46px;
    font-weight: 700;
    font-size: 11px;
  }
  .rcol {
    flex: none;
    line-height: 20px;
    text-align: center;
    color: #333;
    border-right: 1px solid #d4d4d4;
    box-sizing: border-box;
    white-space: nowrap;
  }
  .rcol.act {
    background: #78b6f8;
    color: #fff;
  }
  .rrow {
    height: 46px;
    border-bottom: 1px solid #c8c8c8;
    box-sizing: border-box;
  }
  .rcell {
    flex: none;
    height: 45px;
    border-right: 1px solid #d4d4d4;
    box-sizing: border-box;
  }
  .rcell.act {
    border: 1px solid #888;
    border-width: 0 2px 2px 1px;
    height: 46px;
  }
  .rgut {
    position: absolute;
    left: 0;
    top: 96px;
    width: 7px;
    height: 38px;
    background: #f0f0f0;
  }
  .rscroll {
    position: absolute;
    left: 0;
    right: 0;
    bottom: 0;
    height: 14px;
  }
  .rthumb {
    position: absolute;
    left: 14px;
    top: 2px;
    width: 750px;
    height: 8px;
    border-radius: 4px;
    background: #c9c9c9;
  }

  /* status */
  .status {
    position: relative;
    display: flex;
    align-items: center;
    height: 30px;
    flex: none;
    padding-top: 3px;
    box-sizing: border-box;
    background: #dedfe1;
    white-space: nowrap;
  }
  .coord {
    margin-left: 2px;
    width: 262px;
    flex: none;
    word-spacing: 2px;
  }
  .s1 {
    width: 40px;
    flex: none;
  }
  .s2 {
    width: 84px;
    flex: none;
  }
  .s3 {
    width: 92px;
    flex: none;
  }
  .s4 {
    width: 103px;
    flex: none;
  }
  .s5 {
    width: 36px;
    flex: none;
  }
  .s6 {
    width: 67px;
    flex: none;
  }
  .sbtn {
    display: flex;
    align-items: center;
    justify-content: center;
    height: 24px;
    margin-right: 4px;
    border: 1px solid #a3a3a3;
    background: #d4d5d7;
    box-sizing: border-box;
    flex: none;
  }
  .sbtn .caret {
    margin-left: 3px;
  }
  .w24 {
    width: 24px;
  }
  .w36 {
    width: 36px;
  }
  .sbtn.end {
    margin-right: 3px;
  }
  .sbtn.hot {
    background: #fff;
    border-color: #3e8ae8;
    margin-right: 7px;
  }
  .sbtn.dim {
    background: #d0d0d0;
    margin-right: 6px;
  }
  .sbtn.tx {
    padding: 0 5px 0 5px;
    width: 71px;
  }
  .sbtn.tx + .sbtn.tx {
    width: 61px;
    padding: 0;
  }
  .hint {
    margin-left: 2px;
  }
  .edge {
    height: 3px;
    flex: none;
    background: #2f3a40;
  }
  .marks {
    position: absolute;
    inset: 0;
    width: 1503px;
    height: 1038px;
    pointer-events: none;
  }
</style>
